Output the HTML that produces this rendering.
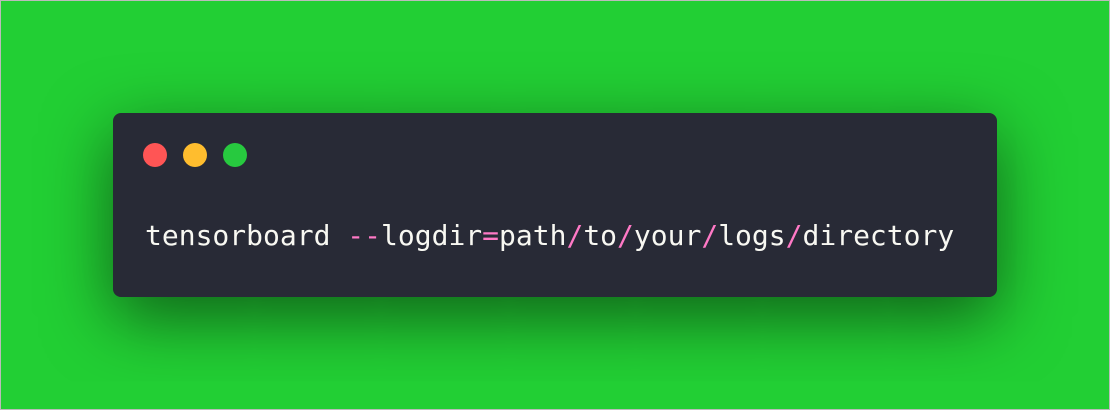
<!DOCTYPE html>
<html><head><style>
html,body{margin:0;padding:0;}
body{width:1110px;height:410px;background:#22cf34;position:relative;overflow:hidden;box-sizing:border-box;border:1px solid #bbb;}
.card{position:absolute;left:112px;top:112px;width:884px;height:184px;background:#282a36;border-radius:8px;box-shadow:0 20px 68px rgba(0,0,0,0.55);}
.dot{position:absolute;top:30px;width:24px;height:24px;border-radius:50%;}
.code{position:absolute;left:32px;top:103px;font-family:"DejaVu Sans Mono","Liberation Mono",monospace;font-size:28px;color:#f8f8f2;white-space:pre;line-height:40px;}
.p{color:#ff79c6;}
</style></head><body>
<div class="card">
<div class="dot" style="left:30px;background:#ff5555"></div>
<div class="dot" style="left:70px;background:#ffbd2e"></div>
<div class="dot" style="left:110px;background:#27c93f"></div>
<div class="code">tensorboard <span class="p">--</span>logdir<span class="p">=</span>path<span class="p">/</span>to<span class="p">/</span>your<span class="p">/</span>logs<span class="p">/</span>directory</div>
</div>
</body></html>
